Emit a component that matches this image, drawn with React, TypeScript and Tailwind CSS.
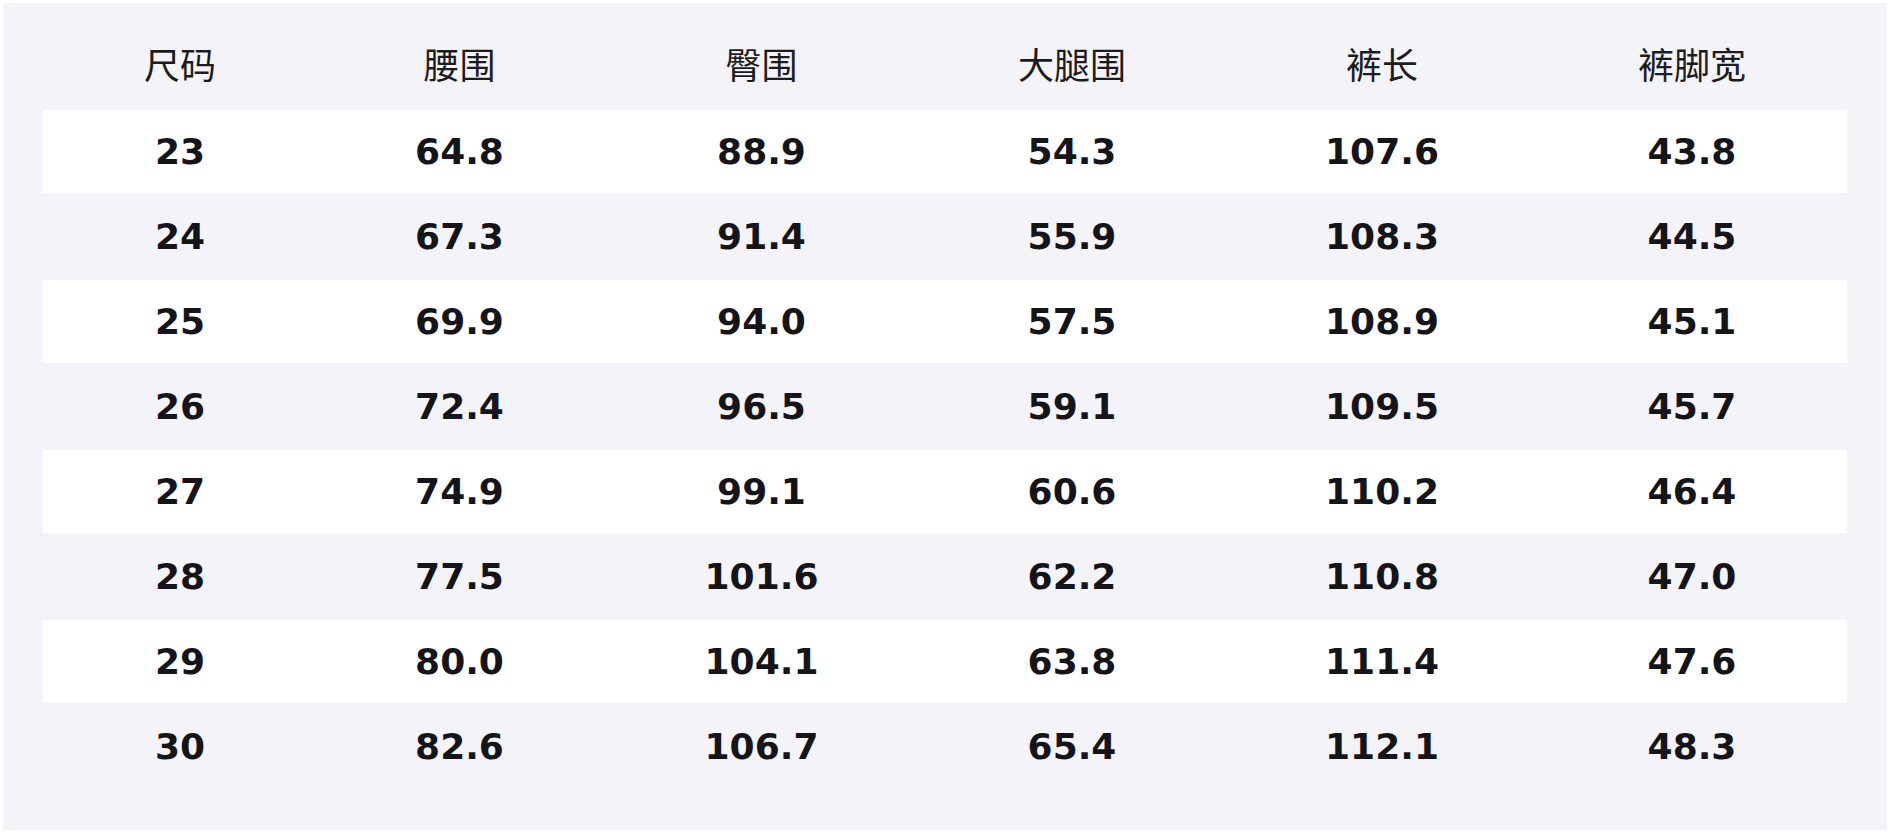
import React from "react";

const headers = ["尺码", "腰围", "臀围", "大腿围", "裤长", "裤脚宽"];
const rows = [
  ["23", "64.8", "88.9", "54.3", "107.6", "43.8"],
  ["24", "67.3", "91.4", "55.9", "108.3", "44.5"],
  ["25", "69.9", "94.0", "57.5", "108.9", "45.1"],
  ["26", "72.4", "96.5", "59.1", "109.5", "45.7"],
  ["27", "74.9", "99.1", "60.6", "110.2", "46.4"],
  ["28", "77.5", "101.6", "62.2", "110.8", "47.0"],
  ["29", "80.0", "104.1", "63.8", "111.4", "47.6"],
  ["30", "82.6", "106.7", "65.4", "112.1", "48.3"],
];

const grid =
  "grid grid-cols-[274px_285px_319px_302px_318px_302px] pr-[4px] h-[83px] items-center text-center";

export default function App() {
  return (
    <div
      className="w-[1890px] h-[833px] bg-white p-[3px]"
      style={{ fontFamily: '"DejaVu Sans", "Noto Sans CJK SC", sans-serif' }}
    >
      <div className="h-full bg-[#f3f3f8] px-[40px] pt-[22px]">
        <div className="flex flex-col gap-[2px]">
          <div className={grid + " text-[36px] leading-none font-normal text-[#1c1c20]"}>
            {headers.map((h) => (
              <div key={h}>{h}</div>
            ))}
          </div>
          {rows.map((r, i) => (
            <div
              key={r[0]}
              className={
                grid +
                " text-[36px] leading-none font-bold text-[#151519] " +
                (i % 2 === 0 ? "bg-white" : "bg-[#f3f3f8]")
              }
            >
              {r.map((c, j) => (
                <div key={j}>{c}</div>
              ))}
            </div>
          ))}
        </div>
      </div>
    </div>
  );
}
